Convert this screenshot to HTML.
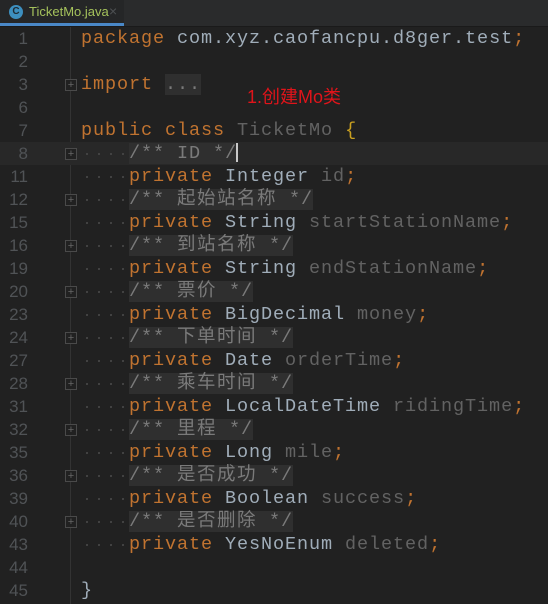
<!DOCTYPE html>
<html><head><meta charset="utf-8"><style>
body{margin:0;width:548px;height:604px;background:#212121;overflow:hidden;position:relative;font-family:"Liberation Mono","Noto Sans CJK SC",monospace}
.tabs{position:absolute;left:0;top:0;width:548px;height:26px;background:#2a2b2c;border-bottom:1px solid #1a1a1a}
.tab{position:absolute;left:0;top:0;width:124px;height:23px;background:#252627;border-bottom:3px solid #4a88c7;font:13px "Liberation Sans",sans-serif;color:#a5c25c}
.tab .ic{position:absolute;left:9px;top:5px;width:14px;height:14px;border-radius:50%;background:#3d8fbf;color:#1e2a33;font-size:10px;font-weight:bold;text-align:center;line-height:14px}
.tab .t{position:absolute;left:29px;top:4px}
.tab .x{position:absolute;left:109px;top:3px;color:#4e5153;font-size:14px}
.gutline{position:absolute;left:70px;top:27px;width:1px;height:577px;background:#333}
.row{position:absolute;left:0;height:23px;width:548px;font-size:18.5px;letter-spacing:0.9px;line-height:23px;white-space:pre;color:#a0adb9}
.ln{position:absolute;left:0;width:28px;text-align:right;color:#505356;font-size:17px;letter-spacing:0;font-family:"Liberation Sans",sans-serif}
.code{position:absolute;left:81px;top:0}
.k{color:#c07330}.g{color:#626262}.c{color:#7a7a7a;background:#2f2f2f}.y{color:#c9a020}
.d{display:inline-block;width:48px;height:23px;vertical-align:top;background:radial-gradient(circle at 6px 12px,#444 1px,transparent 1.2px) 0 0/12px 23px repeat-x}
.cj{letter-spacing:1.5px}
.fold{position:absolute;left:65px;top:6px;width:10px;height:10px;border:1px solid #4a4a4a;background:#212121;color:#666;font-size:11px;letter-spacing:0;line-height:10px;text-align:center;font-family:"Liberation Sans",sans-serif}
.cur{background:#282828}
.note{position:absolute;left:247px;top:83px;color:#e0141a;font:18px "Liberation Sans","Noto Sans CJK SC",sans-serif}
.caret{position:absolute;left:236px;top:143px;width:2px;height:19px;background:#c8c8c8}
</style></head><body>
<div class="tabs"><div class="tab"><span class="ic">C</span><span class="t">TicketMo.java</span><span class="x">×</span></div></div>
<div class="gutline"></div>
<div class="row" style="top:27px"><span class="ln">1</span><span class="code"><span class="k">package</span> com.xyz.caofancpu.d8ger.test<span class="k">;</span></span></div>
<div class="row" style="top:50px"><span class="ln">2</span></div>
<div class="row" style="top:73px"><span class="ln">3</span><span class="fold">+</span><span class="code"><span class="k">import</span> <span class="c">...</span></span></div>
<div class="row" style="top:96px"><span class="ln">6</span></div>
<div class="row" style="top:119px"><span class="ln">7</span><span class="code"><span class="k">public class</span> <span class="g">TicketMo</span> <span class="y">{</span></span></div>
<div class="row cur" style="top:142px"><span class="ln">8</span><span class="fold">+</span><span class="code"><span class="d"></span><span class="c">/** ID */</span></span></div>
<div class="row" style="top:165px"><span class="ln">11</span><span class="code"><span class="d"></span><span class="k">private</span> Integer <span class="g">id</span><span class="k">;</span></span></div>
<div class="row" style="top:188px"><span class="ln">12</span><span class="fold">+</span><span class="code"><span class="d"></span><span class="c">/** <span class="cj">起始站名称</span> */</span></span></div>
<div class="row" style="top:211px"><span class="ln">15</span><span class="code"><span class="d"></span><span class="k">private</span> String <span class="g">startStationName</span><span class="k">;</span></span></div>
<div class="row" style="top:234px"><span class="ln">16</span><span class="fold">+</span><span class="code"><span class="d"></span><span class="c">/** <span class="cj">到站名称</span> */</span></span></div>
<div class="row" style="top:257px"><span class="ln">19</span><span class="code"><span class="d"></span><span class="k">private</span> String <span class="g">endStationName</span><span class="k">;</span></span></div>
<div class="row" style="top:280px"><span class="ln">20</span><span class="fold">+</span><span class="code"><span class="d"></span><span class="c">/** <span class="cj">票价</span> */</span></span></div>
<div class="row" style="top:303px"><span class="ln">23</span><span class="code"><span class="d"></span><span class="k">private</span> BigDecimal <span class="g">money</span><span class="k">;</span></span></div>
<div class="row" style="top:326px"><span class="ln">24</span><span class="fold">+</span><span class="code"><span class="d"></span><span class="c">/** <span class="cj">下单时间</span> */</span></span></div>
<div class="row" style="top:349px"><span class="ln">27</span><span class="code"><span class="d"></span><span class="k">private</span> Date <span class="g">orderTime</span><span class="k">;</span></span></div>
<div class="row" style="top:372px"><span class="ln">28</span><span class="fold">+</span><span class="code"><span class="d"></span><span class="c">/** <span class="cj">乘车时间</span> */</span></span></div>
<div class="row" style="top:395px"><span class="ln">31</span><span class="code"><span class="d"></span><span class="k">private</span> LocalDateTime <span class="g">ridingTime</span><span class="k">;</span></span></div>
<div class="row" style="top:418px"><span class="ln">32</span><span class="fold">+</span><span class="code"><span class="d"></span><span class="c">/** <span class="cj">里程</span> */</span></span></div>
<div class="row" style="top:441px"><span class="ln">35</span><span class="code"><span class="d"></span><span class="k">private</span> Long <span class="g">mile</span><span class="k">;</span></span></div>
<div class="row" style="top:464px"><span class="ln">36</span><span class="fold">+</span><span class="code"><span class="d"></span><span class="c">/** <span class="cj">是否成功</span> */</span></span></div>
<div class="row" style="top:487px"><span class="ln">39</span><span class="code"><span class="d"></span><span class="k">private</span> Boolean <span class="g">success</span><span class="k">;</span></span></div>
<div class="row" style="top:510px"><span class="ln">40</span><span class="fold">+</span><span class="code"><span class="d"></span><span class="c">/** <span class="cj">是否删除</span> */</span></span></div>
<div class="row" style="top:533px"><span class="ln">43</span><span class="code"><span class="d"></span><span class="k">private</span> YesNoEnum <span class="g">deleted</span><span class="k">;</span></span></div>
<div class="row" style="top:556px"><span class="ln">44</span></div>
<div class="row" style="top:579px"><span class="ln">45</span><span class="code">}</span></div>
<div class="note">1.创建Mo类</div>
<div class="caret"></div>
</body></html>
